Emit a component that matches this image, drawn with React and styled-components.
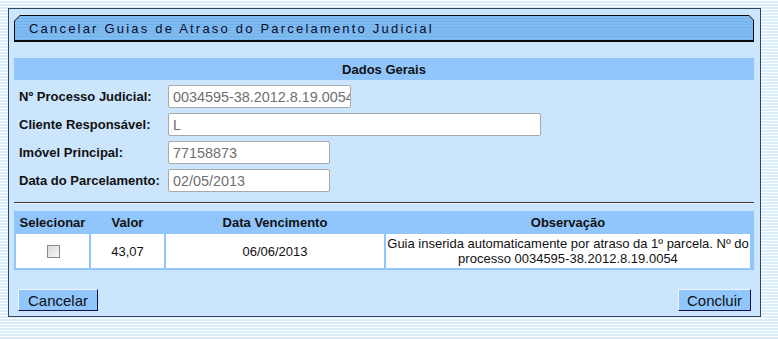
import React from "react";
import styled, { createGlobalStyle } from "styled-components";

const GlobalStyle = createGlobalStyle`
  html, body {
    margin: 0;
    padding: 0;
  }
  body {
    background: repeating-linear-gradient(
      to bottom,
      #ffffff 0px,
      #ffffff 1px,
      #d9ecfa 1px,
      #d9ecfa 3px
    );
    font-family: "Liberation Sans", Arial, sans-serif;
    min-height: 339px;
  }
`;

const Page = styled.div`
  padding: 8px 0 0 8px;
  width: 753px;
`;

const Panel = styled.div`
  background: #cbe5fd;
  border: 1px solid #2f4660;
  padding: 6px 6px 4px 5px;
  height: 309px;
  box-sizing: border-box;
  width: 753px;
`;

const TitleOuter = styled.div`
  background: #0a0a0a;
  padding: 1px 1px 2px 1px;
  clip-path: polygon(6px 0, calc(100% - 5px) 0, 100% 5px, 100% 100%, 0 100%, 0 6px);
`;

const TitleInner = styled.div`
  height: 24px;
  clip-path: polygon(5px 0, calc(100% - 4px) 0, 100% 4px, 100% 100%, 0 100%, 0 5px);
  background: repeating-linear-gradient(
    to bottom,
    #80bcf2 0px,
    #80bcf2 2px,
    #72b1ea 2px,
    #72b1ea 3px
  );
  display: flex;
  align-items: center;
  padding-left: 14px;
  font-size: 13px;
  letter-spacing: 2.2px;
  color: #0b0b2a;
`;

const SectionBar = styled.div`
  margin-top: 16px;
  height: 22px;
  background: #90c6fb;
  display: flex;
  align-items: center;
  justify-content: center;
  font-weight: bold;
  font-size: 13px;
  color: #111;
`;

const Form = styled.div`
  display: flex;
  flex-direction: column;
  padding-top: 2px;
`;

const Row = styled.div`
  display: flex;
  align-items: center;
  height: 28px;
`;

const Label = styled.div`
  width: 149px;
  padding-left: 5px;
  font-weight: bold;
  font-size: 13px;
  color: #111;
`;

const Input = styled.div`
  width: ${(p) => p.$w}px;
  height: 23px;
  box-sizing: border-box;
  background: #fff;
  border: 1px solid #a9a9a9;
  border-radius: 2px;
  font-size: 14.4px;
  color: #707070;
  padding: 3px 4px 0;
  overflow: hidden;
  white-space: nowrap;
`;

const Divider = styled.div`
  margin-top: 8px;
  height: 1px;
  background: #3b3b3b;
  border-bottom: 1px solid #e8f3fd;
`;

const Table = styled.div`
  margin-top: 7px;
  background: #90c6fb;
  padding: 0 3px 2px 2px;
  display: grid;
  grid-template-columns: 73px 73px 218px 364px;
  column-gap: 2px;
  font-size: 13px;
  color: #111;
`;

const Head = styled.div`
  height: 23px;
  display: flex;
  align-items: center;
  justify-content: center;
  font-weight: bold;
`;

const Cell = styled.div`
  background: #fff;
  height: 34px;
  display: flex;
  align-items: center;
  justify-content: center;
  text-align: center;
  line-height: 15px;
  white-space: nowrap;
`;

const Check = styled.div`
  width: 11px;
  height: 11px;
  border: 1px solid #8a8a8a;
  background: linear-gradient(135deg, #dcdcdc, #f4f4f4);
  margin-left: 1px;
`;

const Actions = styled.div`
  margin-top: 19px;
  display: flex;
  justify-content: space-between;
  padding: 0 3px 0 4px;
`;

const Button = styled.div`
  height: 22px;
  box-sizing: border-box;
  padding: 0 ${(p) => p.$px}px;
  background: #90c6fb;
  border-top: 1px solid #f2f8ff;
  border-left: 1px solid #f2f8ff;
  border-right: 1px solid #10104a;
  border-bottom: 1px solid #10104a;
  display: flex;
  align-items: center;
  font-size: 15px;
  color: #111;
`;

export default function App() {
  const fields = [
    { label: "Nº Processo Judicial:", value: "0034595-38.2012.8.19.0054", w: 183 },
    { label: "Cliente Responsável:", value: "L", w: 373 },
    { label: "Imóvel Principal:", value: "77158873", w: 162 },
    { label: "Data do Parcelamento:", value: "02/05/2013", w: 162 },
  ];

  return (
    <>
      <GlobalStyle />
      <Page>
        <Panel>
          <TitleOuter>
            <TitleInner>Cancelar Guias de Atraso do Parcelamento Judicial</TitleInner>
          </TitleOuter>
          <SectionBar>Dados Gerais</SectionBar>
          <Form>
            {fields.map((f) => (
              <Row key={f.label}>
                <Label>{f.label}</Label>
                <Input $w={f.w}>{f.value}</Input>
              </Row>
            ))}
          </Form>
          <Divider />
          <Table>
            <Head>Selecionar</Head>
            <Head>Valor</Head>
            <Head>Data Vencimento</Head>
            <Head>Observação</Head>
            <Cell><Check /></Cell>
            <Cell>43,07</Cell>
            <Cell>06/06/2013</Cell>
            <Cell>
              Guia inserida automaticamente por atraso da 1º parcela. Nº do
              <br />
              processo 0034595-38.2012.8.19.0054
            </Cell>
          </Table>
          <Actions>
            <Button $px={9}>Cancelar</Button>
            <Button $px={8}>Concluir</Button>
          </Actions>
        </Panel>
      </Page>
    </>
  );
}
